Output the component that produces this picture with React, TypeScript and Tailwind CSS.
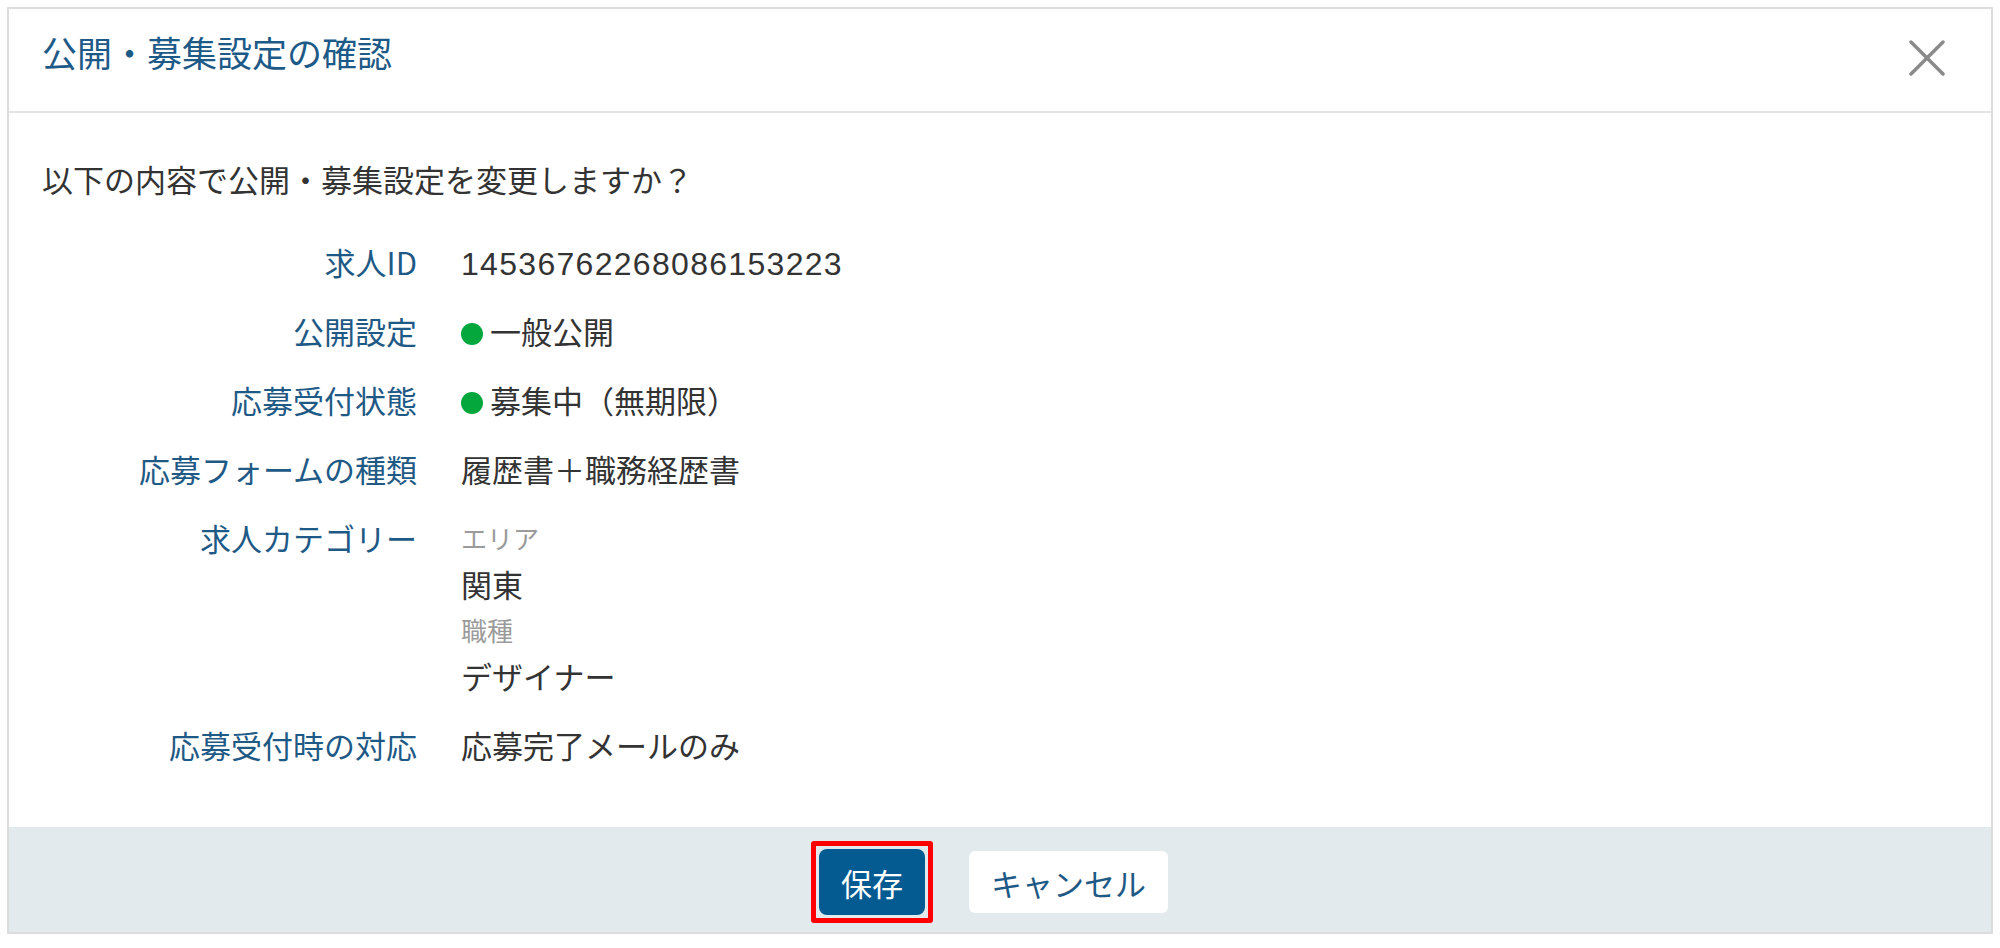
import React from "react";

const FONT = { fontFamily: '"Noto Sans CJK JP", "Noto Sans", sans-serif' };

function Row({ label, children }: { label: string; children: React.ReactNode }) {
  return (
    <div className="flex items-start">
      <div className="w-[375px] shrink-0 text-right text-[31px] leading-[46px] text-[#1f5a86]">{label}</div>
      <div className="ml-[44px] text-[31px] leading-[46px] text-[#333333]">{children}</div>
    </div>
  );
}

function Dot() {
  return <span className="inline-block w-[22px] h-[22px] rounded-full bg-[#03a73c] mr-[7px] align-[-1px]" />;
}

export default function App() {
  return (
    <div className="w-[2000px] h-[948px] bg-white p-[7px]" style={FONT}>
      <div className="w-full border-2 border-[#dcdcdc] bg-white flex flex-col">
        <div className="h-[104px] border-b-2 border-[#e3e3e3] flex items-start justify-between pl-[33px] pr-[46px]">
          <div className="mt-[23px] text-[35px] leading-[40px] text-[#1d5a87]">公開・募集設定の確認</div>
          <svg className="mt-[31px]" width="36" height="36" viewBox="0 0 36 36">
            <line x1="2" y1="2" x2="34" y2="34" stroke="#8a8a8a" strokeWidth="3.5" strokeLinecap="round" />
            <line x1="34" y1="2" x2="2" y2="34" stroke="#8a8a8a" strokeWidth="3.5" strokeLinecap="round" />
          </svg>
        </div>
        <div className="pt-[43px] pb-[59px] pl-[33px] flex flex-col">
          <div className="text-[31px] leading-[46px] text-[#333333]">以下の内容で公開・募集設定を変更しますか？</div>
          <div className="mt-[37px] flex flex-col gap-[23px]">
            <Row label="求人ID">
              <div
                className="h-[46px] leading-[50px] tracking-[1.3px] text-[32px]"
                style={{ fontFamily: '"Liberation Sans", sans-serif' }}
              >
                14536762268086153223
              </div>
            </Row>
            <Row label="公開設定">
              <Dot />一般公開
            </Row>
            <Row label="応募受付状態">
              <Dot />募集中（無期限）
            </Row>
            <Row label="応募フォームの種類">履歴書＋職務経歴書</Row>
            <Row label="求人カテゴリー">
              <div className="flex flex-col">
                <div className="text-[26px] leading-[46px] text-[#9b9b9b]">エリア</div>
                <div>関東</div>
                <div className="text-[26px] leading-[46px] text-[#9b9b9b]">職種</div>
                <div>デザイナー</div>
              </div>
            </Row>
            <Row label="応募受付時の対応">応募完了メールのみ</Row>
          </div>
        </div>
        <div className="h-[105px] bg-[#e2eaed] flex items-center justify-center pt-[5px] pr-[21px]">
          <div className="border-[5px] border-[#ff0000] p-[3px] rounded-[3px]">
            <button className="w-[106px] h-[66px] rounded-[8px] bg-[#035b92] text-white text-[31px] leading-none flex items-center justify-center">
              保存
            </button>
          </div>
          <button className="ml-[36px] w-[199px] h-[62px] rounded-[6px] bg-white text-[#1f5a86] text-[31px] leading-none flex items-center justify-center">
            キャンセル
          </button>
        </div>
      </div>
    </div>
  );
}
